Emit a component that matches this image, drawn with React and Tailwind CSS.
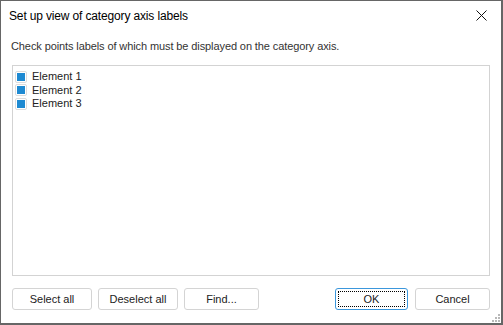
import React from "react";

const font = { fontFamily: '"Segoe UI", "Liberation Sans", Arial, sans-serif' };

function Check({ label }) {
  return (
    <div className="flex h-[13.5px] items-center gap-[5px]">
      <span className="flex h-[12px] w-[12px] items-center justify-center rounded-[2px] border border-[#dcdcdc] bg-white">
        <span className="h-[8px] w-[8px] bg-[#1e8ad2]" />
      </span>
      <span className="text-[11px] leading-none text-[#222]">{label}</span>
    </div>
  );
}

function Btn({ children, w, primary }) {
  return (
    <button
      className={
        "flex h-[22px] items-center justify-center rounded-[3px] border bg-white text-[11px] text-[#222] " +
        (primary ? "border-[#3b97dc] p-[2px]" : "border-[#d4d4d4]") +
        " " + w
      }
    >
      {primary ? (
        <span className="flex h-full w-full items-center justify-center border border-dotted border-black">
          {children}
        </span>
      ) : (
        children
      )}
    </button>
  );
}

export default function App() {
  return (
    <div
      style={font}
      className="relative flex h-[325px] w-[503px] flex-col border border-r-2 border-b-2 border-[#666] bg-white"
    >
      <div className="flex h-[30px] items-center justify-between pl-[8px] pr-[14px]">
        <span className="text-[12px] tracking-[-0.15px] text-black">Set up view of category axis labels</span>
        <svg width="11" height="11" viewBox="0 0 11 11" className="mb-[2px]">
          <path d="M0.5 0.5 L10.5 10.5 M10.5 0.5 L0.5 10.5" stroke="#111" strokeWidth="1" />
        </svg>
      </div>
      <div className="mt-[10px] pl-[10px] text-[11px] tracking-[-0.1px] leading-none text-[#333]">
        Check points labels of which must be displayed on the category axis.
      </div>
      <div className="mx-[11px] mt-[13px] flex h-[211px] flex-col border border-[#d3d3d3] pl-[2px] pt-[4px]">
        <Check label="Element 1" />
        <Check label="Element 2" />
        <Check label="Element 3" />
      </div>
      <div className="mt-[12px] flex px-[11px]">
        <div className="flex gap-[6px]">
          <Btn w="w-[80px]">Select all</Btn>
          <Btn w="w-[80px]">Deselect all</Btn>
          <Btn w="w-[75px]">Find...</Btn>
        </div>
        <div className="ml-auto flex gap-[7px]">
          <Btn w="w-[73px]" primary>OK</Btn>
          <Btn w="w-[75px]">Cancel</Btn>
        </div>
      </div>
      <svg width="10" height="10" viewBox="0 0 10 10" className="absolute bottom-[1px] right-[1px]">
        {[[8, 2], [8, 5], [5, 5], [8, 8], [5, 8], [2, 8]].map(([x, y], i) => (
          <rect key={i} x={x} y={y} width="2" height="2" fill="#b8b8b8" />
        ))}
      </svg>
    </div>
  );
}
